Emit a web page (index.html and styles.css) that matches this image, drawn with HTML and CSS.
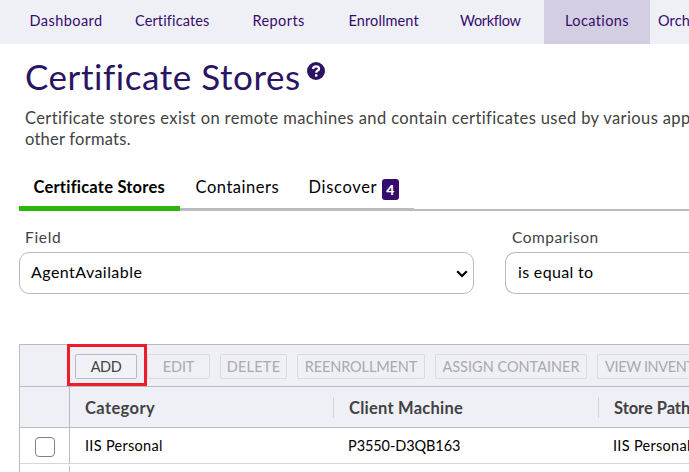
FILE: index.html
```
<!DOCTYPE html>
<html lang="en">
<head>
<meta charset="utf-8">
<title>Certificate Stores</title>
<link rel="stylesheet" href="styles.css">
</head>
<body>
<nav class="nav">
  <a class="nav-item dashboard">Dashboard</a>
  <a class="nav-item certificates">Certificates</a>
  <a class="nav-item reports">Reports</a>
  <a class="nav-item enrollment">Enrollment</a>
  <a class="nav-item workflow">Workflow</a>
  <a class="nav-item locations active">Locations</a>
  <a class="nav-item orchestrators">Orch</a>
</nav>
<main>
  <header class="heading">
    <h1>Certificate Stores</h1>
    <svg class="help" viewBox="0 0 18 18" width="18" height="18" aria-label="Help">
      <circle cx="9" cy="9" r="9" fill="#2a1463"/>
      <path d="M6 7Q6.3 4.4 9 4.4Q12 4.4 12 6.7Q12 8.1 10.3 8.8Q9.2 9.3 9.2 10.8" fill="none" stroke="#fff" stroke-width="2.3"/>
      <rect x="8" y="12.2" width="2.4" height="2.4" fill="#fff"/>
    </svg>
  </header>
  <p class="intro"><span class="intro-first">Certificate stores exist on remote machines and contain certificates used by various app</span><br>other formats.</p>
  <div class="tabs">
    <a class="tab selected">Certificate Stores</a>
    <a class="tab containers">Containers</a>
    <a class="tab discover">Discover<span class="count">4</span></a>
  </div>
  <section class="filters">
    <div class="filter">
      <label>Field</label>
      <div class="select agent"><span>AgentAvailable</span>
        <svg viewBox="0 0 12 8" width="12" height="8"><path d="M1.2 1.2L6 6L10.8 1.2" fill="none" stroke="#000" stroke-width="2.2"/></svg>
      </div>
    </div>
    <div class="filter wide">
      <label class="comparison">Comparison</label>
      <div class="select"><span>is equal to</span></div>
    </div>
  </section>
  <section class="grid">
    <div class="toolbar">
      <div class="callout"></div>
      <button class="add">ADD</button>
      <button class="edit" disabled>EDIT</button>
      <button class="delete" disabled>DELETE</button>
      <button class="reenroll" disabled>REENROLLMENT</button>
      <button class="assign" disabled>ASSIGN CONTAINER</button>
      <button class="view" disabled>VIEW INVENT</button>
    </div>
    <div class="row head">
      <div class="check-cell"></div>
      <div class="cell category">Category</div>
      <div class="cell">Client Machine</div>
      <div class="cell path">Store Path</div>
    </div>
    <div class="row body">
      <div class="check-cell"><span class="checkbox"></span></div>
      <div class="cell">IIS Personal</div>
      <div class="cell machine">P3550-D3QB163</div>
      <div class="cell">IIS Personal</div>
    </div>
    <div class="row next"><div class="check-cell"></div></div>
  </section>
</main>
</body>
</html>
```
FILE: styles.css
```
* { box-sizing: border-box; }
body {
  margin: 0;
  height: 472px;
  overflow: hidden;
  background: #fff;
  font-family: Lato, "Liberation Sans", sans-serif;
}
.nav {
  display: grid;
  grid-template-columns: 30px 105px 118px 96px 111px 84px 106px 1fr;
  height: 44px;
  background: #eff0f6;
}
.nav-item {
  min-width: 0;
  font-size: 14.5px;
  line-height: 41px;
  color: #350b6e;
  white-space: nowrap;
}
.dashboard { grid-column: 2; letter-spacing: .45px; margin-left: -.5px; }
.certificates { letter-spacing: .13px; }
.reports { letter-spacing: .4px; margin-left: -.5px; }
.enrollment { letter-spacing: .12px; margin-left: -.5px; }
.workflow { letter-spacing: -.32px; }
.locations { letter-spacing: .39px; }
.active { background: #d3cee2; padding-left: 21px; }
.orchestrators { padding-left: 8px; letter-spacing: .1px; overflow: hidden; }
.heading { display: flex; height: 62px; padding-left: 25px; }
h1 {
  margin: 0;
  padding-top: 11px;
  font-size: 35px;
  line-height: 42px;
  font-weight: 400;
  letter-spacing: .55px;
  color: #2a1463;
}
.help { margin: 18px 0 0 6px; }
.intro {
  margin: 0 0 0 25px;
  padding-top: 2px;
  height: 62px;
  overflow: hidden;
  font-size: 16.5px;
  line-height: 21px;
  letter-spacing: .24px;
  color: #424242;
  white-space: nowrap;
}
.intro-first { letter-spacing: .38px; }
.tabs {
  display: flex;
  margin-left: 19px;
  height: 43px;
  background: linear-gradient(#bbbbc2, #bbbbc2) 0 100% / 100% 2px no-repeat;
}
.tab {
  display: flex;
  height: 43px;
  padding-left: 15.5px;
  border-bottom: 3px solid #bbbbc2;
  font-size: 16.5px;
  line-height: 39px;
  letter-spacing: .53px;
  color: #000;
}
.selected {
  width: 161px;
  padding-left: 14.5px;
  border-bottom: 5px solid #29b80a;
  font-weight: 700;
  letter-spacing: .22px;
}
.containers { width: 113px; }
.discover { width: 121px; letter-spacing: .67px; }
.count {
  width: 17px;
  height: 21px;
  margin: 11px 0 0 4.5px;
  border-radius: 3px;
  background: #350b6e;
  color: #fff;
  font-size: 14px;
  font-weight: 900;
  line-height: 21px;
  letter-spacing: 0;
  text-align: center;
}
.filters { display: flex; gap: 31px; margin-left: 19px; height: 133px; }
.filter { flex: none; width: 455px; padding-top: 16px; }
.wide { flex: 1; width: auto; }
.wide .select { border-right: 0; border-radius: 10px 0 0 10px; }
label {
  display: block;
  height: 25px;
  padding-left: 6px;
  font-size: 15.5px;
  line-height: 20px;
  letter-spacing: .7px;
  color: #424242;
}
.comparison { letter-spacing: .5px; padding-left: 7px; }
.select {
  display: flex;
  justify-content: space-between;
  align-items: center;
  height: 42px;
  padding: 0 5px 0 12px;
  border: 1px solid #b9b9bd;
  border-radius: 10px;
  font-size: 16px;
  letter-spacing: .33px;
  color: #000;
}
.select span { padding-bottom: 3px; }
.select svg { margin-top: 2px; }
.agent { padding-left: 11px; letter-spacing: .45px; }
.grid {
  margin-left: 19px;
  border: solid #b9bac3;
  border-width: 1px 0 0 1px;
}
.toolbar {
  position: relative;
  display: flex;
  gap: 10px;
  height: 42px;
  padding: 9px 0 0 55px;
  border-bottom: 1px solid #b9bac3;
  background: #eff0f6;
}
button {
  flex: none;
  height: 25px;
  padding: 0;
  border: 1px solid #b9bac0;
  border-radius: 2px;
  background: #f1f2f7;
  color: #424242;
  font: 14.5px/22px Lato, "Liberation Sans", sans-serif;
}
button:disabled { border-color: #d9dae0; background: #eff0f6; color: #a9a9ae; }
.add { width: 62px; letter-spacing: -.42px; }
.edit { width: 63px; letter-spacing: -.15px; }
.delete { width: 67px; letter-spacing: .24px; }
.reenroll { width: 128px; letter-spacing: -.12px; }
.assign { width: 152px; }
button.view {
  flex: 1;
  min-width: 0;
  padding-left: 7px;
  border-right: 0;
  border-radius: 2px 0 0 2px;
  overflow: hidden;
  white-space: nowrap;
  text-align: left;
  letter-spacing: -.37px;
}
.callout {
  position: absolute;
  left: 47px;
  top: -1px;
  width: 80px;
  height: 42px;
  border: 3px solid #ee1c25;
}
.row {
  display: grid;
  grid-template-columns: 50px 263px 265px 1fr;
  border-bottom: 1px solid #d5d5da;
}
.check-cell { display: flex; border-right: 1px solid #b9bac3; }
.cell { min-width: 0; padding-left: 15px; overflow: hidden; white-space: nowrap; }
.head {
  height: 41px;
  border-bottom-color: #b9bac3;
  background: #eff0f6;
  font-size: 16.5px;
  font-weight: 700;
  letter-spacing: .24px;
  color: #424242;
}
.head .cell {
  height: 21px;
  margin-top: 10px;
  border-left: 1px solid #d3d4da;
  line-height: 22px;
}
.head .category { border-left-color: transparent; letter-spacing: .39px; padding-left: 14px; }
.head .path { letter-spacing: -.04px; }
.body {
  height: 36px;
  font-size: 14.5px;
  line-height: 36px;
  letter-spacing: .3px;
  color: #000;
}
.machine { letter-spacing: -.08px; }
.next { height: 8px; border-bottom: 0; }
.next .check-cell { margin-top: 2px; }
.checkbox {
  width: 20px;
  height: 20px;
  margin: 9px 0 0 15px;
  border: 1.5px solid #7c828b;
  border-radius: 4px;
}
```
